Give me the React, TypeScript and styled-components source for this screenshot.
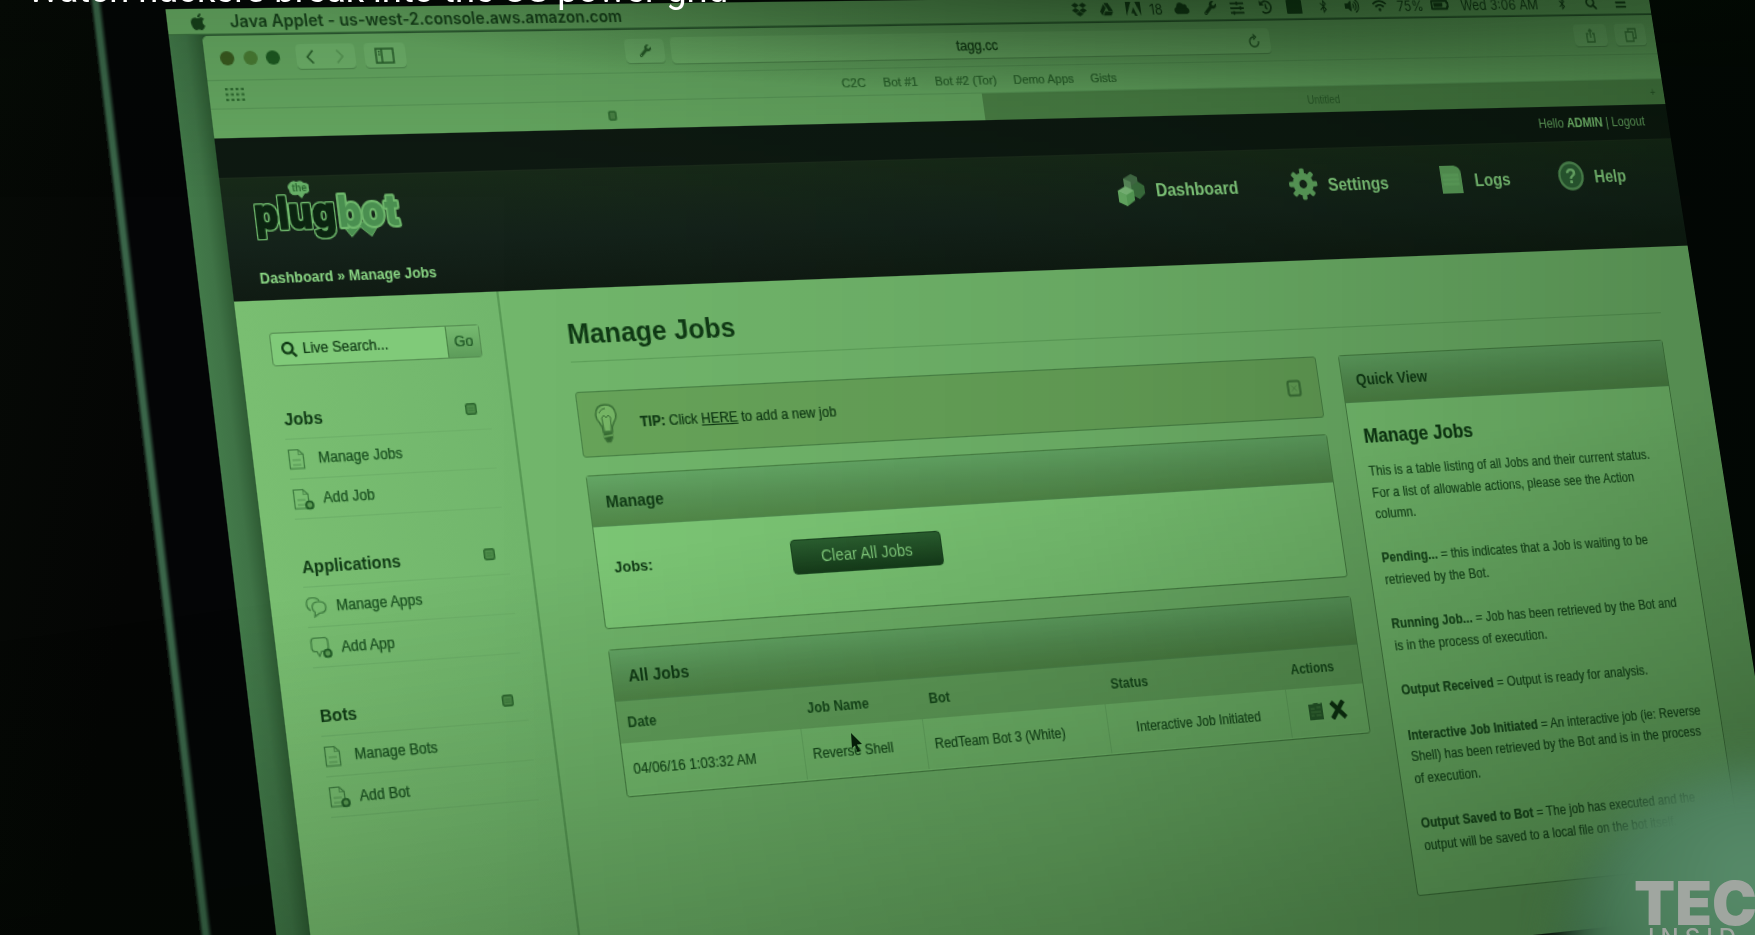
import React from "react";
import styled, { createGlobalStyle } from "styled-components";
import {
  FaApple, FaDropbox, FaGoogleDrive, FaCloud, FaWrench, FaHistory, FaBluetoothB,
  FaVolumeUp, FaWifi, FaBatteryThreeQuarters, FaSearch, FaBars, FaSlidersH,
} from "react-icons/fa";

const GlobalStyle = createGlobalStyle`
  html, body { margin: 0; background: #050606; }
  *, *::before, *::after { box-sizing: border-box; }
`;

const ink = "#103a15";
const soft = "#23602a";
const line = "#4a8446";

/* Projection of the flat display (origin: top-left of the web page) onto the camera view. */
const projection =
  "matrix3d(1.20838,-0.013395,0,0.000106818,0.13761,1.19021,0,-0.00002951,0,0,1,0,215.5,138.5,0,1)";

const Scene = styled.div`
  position: relative;
  width: 1755px;
  height: 935px;
  overflow: hidden;
  background: linear-gradient(100deg, #060a06 0%, #040504 12%, #040505 90%, #0a0e0b 100%);
  font-family: "Liberation Sans", Arial, sans-serif;
  color: ${ink};
`;

const Laptop = styled.div`
  position: absolute;
  left: 0;
  top: 0;
  transform-origin: 0 0;
  transform: ${projection} translate(-91px, -160px);
  width: 1621px;
  height: 960px;
  padding: 51px 0 0 62px;
  background: linear-gradient(90deg, #060a07 0, #3a6549 3px, #3a6549 6px, #040506 10px);
`;

const Display = styled.div`
  width: 1436px;
  height: 868px;
  overflow: hidden;
  display: flex;
  flex-direction: column;
  background: linear-gradient(90deg, #437a4a 0, #3f7346 14px, #2c5831 30px);
`;

const MenuBar = styled.div`
  flex: none;
  height: 22px;
  display: flex;
  justify-content: space-between;
  align-items: center;
  padding: 0 17px 0 18px;
  background: #64a560;
  border-bottom: 1px solid #3d7340;
  font-family: Inter, sans-serif;
  font-size: 14px;
  color: #17401b;
`;

const MenuLeft = styled.div`
  display: flex;
  align-items: center;
  gap: 19px;
  font-weight: 600;
  white-space: nowrap;
`;

const StatusItems = styled.div`
  display: flex;
  align-items: center;
  font-size: 13px;
`;

const StatusItem = styled.span<{ $w: number }>`
  width: ${(p) => p.$w}px;
  display: flex;
  justify-content: center;
  white-space: nowrap;
`;

const Window = styled.div`
  flex: 1;
  margin: 1px 0 0 28px;
  display: flex;
  flex-direction: column;
  border-radius: 5px 0 0 0;
  overflow: hidden;
  background: #72b76c;
`;

const Toolbar = styled.div`
  flex: none;
  height: 38px;
  display: grid;
  grid-template-columns: 363px 36px 584px 1fr;
  column-gap: 6px;
  align-items: center;
  background: #66a862;
  border-bottom: 1px solid #5a9958;
`;

const ToolLeft = styled.div`
  display: flex;
  align-items: center;
  padding-left: 13px;
`;

const Light = styled.i<{ $c: string }>`
  width: 12px;
  height: 12px;
  margin-right: 7.5px;
  border-radius: 50%;
  background: ${(p) => p.$c};
`;

const ToolButton = styled.div<{ $w: number; $ml?: number }>`
  width: ${(p) => p.$w}px;
  height: 21px;
  margin-left: ${(p) => p.$ml ?? 0}px;
  display: flex;
  align-items: center;
  justify-content: space-around;
  border-radius: 4px;
  background: #6fb26b;
  box-shadow: 0 1px 0 #528c50;
  color: #2a5f2c;
`;

const AddressBar = styled.div`
  height: 23px;
  display: grid;
  grid-template-columns: 1fr auto 1fr;
  align-items: center;
  padding: 0 10px 0 6px;
  border-radius: 4px;
  background: #70b46b;
  box-shadow: 0 1px 0 #528c50;
  font-size: 12.5px;
  color: #164019;
  -webkit-text-stroke: 0.3px #164019;
  svg { justify-self: end; }
`;

const ToolRight = styled.div`
  display: flex;
  justify-content: flex-end;
  padding-right: 10px;
`;

const Bookmarks = styled.div`
  flex: none;
  height: 24px;
  display: grid;
  grid-template-columns: 1fr auto 1fr;
  align-items: center;
  padding: 0 22px 0 14px;
  background: #66a862;
  border-bottom: 1px solid #5a9958;
`;

const BookmarkList = styled.div`
  display: flex;
  gap: 16.5px;
  font-size: 11.5px;
  color: #2b632d;
  -webkit-text-stroke: 0.2px #2b632d;
`;

const TabStrip = styled.div`
  flex: none;
  height: 24px;
  display: grid;
  grid-template-columns: 699px 1fr 24px;
  font-size: 10px;
  color: #2b5c2b;
`;

const Tab = styled.div<{ $active?: boolean }>`
  display: flex;
  align-items: center;
  justify-content: center;
  background: ${(p) => (p.$active ? "#67a962" : "#4d8448")};
`;

const TopBar = styled.div`
  flex: none;
  height: 34px;
  display: flex;
  align-items: center;
  justify-content: flex-end;
  padding: 0 26px 1px;
  background: #0e1912;
  border-bottom: 1px solid #1c2c1c;
  color: #72b76c;
  font-size: 12px;
  white-space: pre;
  b { color: #86d47e; }
`;

const Header = styled.div`
  flex: none;
  height: 102px;
  padding: 0 56px 0 23px;
  background: linear-gradient(180deg, #182a19 0%, #14221a 55%, #101b13 100%);
  color: #8ad684;
`;

const HeaderRow = styled.div`
  height: 62px;
  display: flex;
  justify-content: space-between;
  align-items: center;
`;

const Nav = styled.nav`
  display: flex;
  gap: 52.5px;
  padding-top: 2px;
`;

const NavItem = styled.div`
  display: flex;
  align-items: center;
  gap: 11px;
  font-size: 16px;
  font-weight: bold;
  line-height: 26px;
  span { padding-top: 4px; }
`;

const Breadcrumb = styled.div`
  margin: 12px 0 0 1px;
  line-height: 20px;
  font-size: 12px;
  font-weight: bold;
`;

const Body = styled.div`
  flex: 1;
  display: flex;
  background: #72b76c;
`;

const Sidebar = styled.aside`
  width: 228px;
  padding: 27px 19px 0 26px;
  border-right: 2px solid #589a55;
  background: linear-gradient(90deg, #79be71, #71b66c);
`;

const Search = styled.div`
  height: 28px;
  display: grid;
  grid-template-columns: 1fr 29px;
  border: 1px solid #568f52;
  border-radius: 3px;
  background: #80ca79;
  font-size: 12px;
  -webkit-text-stroke: 0.2px ${ink};
`;

const SearchField = styled.div`
  display: flex;
  align-items: center;
  gap: 5px;
  padding-left: 8px;
`;

const GoButton = styled.div`
  display: flex;
  align-items: center;
  justify-content: center;
  border-left: 1px solid ${line};
  background: linear-gradient(#76ba70, #5d9c5a);
  color: ${soft};
  font-size: 12.5px;
`;

const Section = styled.section`
  margin: 27px 0 -5px 3px;
`;

const SectionTitle = styled.div`
  height: 33.5px;
  display: flex;
  align-items: center;
  justify-content: space-between;
  padding: 1px 11px 0 1px;
  border-bottom: 1px solid #6db068;
  font-size: 14px;
  font-weight: bold;
  svg { margin-top: -1px; }
`;

const SideLink = styled.div`
  height: 33.3px;
  display: flex;
  align-items: center;
  gap: 7px;
  padding-top: 1px;
  border-bottom: 1px solid #6db068;
  font-size: 12px;
  color: #1b5121;
  -webkit-text-stroke: 0.25px #1b5121;
  svg { flex: none; }
`;

const Main = styled.main`
  flex: 1;
  padding: 25px 41px 0 56px;
`;

const PageTitle = styled.h1`
  margin: 0 0 25px;
  padding-bottom: 9px;
  border-bottom: 1px solid #5fa25b;
  font-size: 24px;
  line-height: 28px;
`;

const Columns = styled.div`
  display: grid;
  grid-template-columns: 710px 347px;
  column-gap: 23px;
  align-items: start;
`;

const Stack = styled.div`
  display: flex;
  flex-direction: column;
`;

const Tip = styled.div`
  height: 56px;
  display: grid;
  grid-template-columns: 20px 1fr 16px;
  column-gap: 20px;
  align-items: center;
  padding: 0 17px 0 14px;
  border: 1.4px solid ${line};
  border-radius: 3px;
  background: #68a55a;
  font-size: 12px;
  -webkit-text-stroke: 0.2px ${ink};
`;

const Panel = styled.section<{ $h: number; $mt?: number }>`
  height: ${(p) => p.$h}px;
  margin-top: ${(p) => p.$mt ?? 0}px;
  border: 1.3px solid ${line};
  border-radius: 3px;
  background: #7dc876;
`;

const PanelTitle = styled.div`
  height: 43px;
  display: flex;
  align-items: center;
  padding: 1px 0 0 14px;
  border-bottom: 1px solid #528c4f;
  background: linear-gradient(#65a866 0%, #5a9657 50%, #528949 100%);
  font-size: 14px;
  font-weight: bold;
`;

const ManageRow = styled.div`
  display: grid;
  grid-template-columns: 160.5px 141px;
  align-items: center;
  padding: 21px 14px;
  font-size: 13px;
  font-weight: bold;
  span { padding-bottom: 3px; }
`;

const DarkButton = styled.button`
  height: 30px;
  padding: 0;
  border: 1px solid #1a4620;
  border-radius: 4px;
  background: linear-gradient(#2c6131, #163d1b);
  color: #83cd7d;
  font: 14px "Liberation Sans", Arial, sans-serif;
`;

const TableRow = styled.div<{ $head?: boolean }>`
  height: ${(p) => (p.$head ? 35 : 43)}px;
  display: grid;
  grid-template-columns: 162.5px 113.5px 174.5px 179px 1fr;
  background: ${(p) => (p.$head ? "#65a45e" : "#77bf70")};
  font-size: 12px;
  font-weight: ${(p) => (p.$head ? "bold" : "normal")};
  color: #174a1c;
  -webkit-text-stroke: ${(p) => (p.$head ? 0 : 0.15)}px #174a1c;
`;

const Cell = styled.div<{ $center?: boolean; $rule?: boolean }>`
  display: flex;
  align-items: center;
  justify-content: ${(p) => (p.$center ? "center" : "flex-start")};
  gap: 5px;
  padding: 0 ${(p) => (p.$center ? 0 : 8)}px;
  border-right: ${(p) => (p.$rule ? "1px solid #6aaf65" : "0")};
  white-space: nowrap;
`;

const QuickBody = styled.div`
  padding: 20px 13.5px;
  font-size: 12px;
  line-height: 19.6px;
  color: #1a4d1f;
  letter-spacing: 0.07px;
  -webkit-text-stroke: 0.2px #1a4d1f;
`;

const QuickTitle = styled.h2`
  margin: 0 0 12px;
  font-size: 18px;
  line-height: 22px;
  letter-spacing: 0;
  color: ${ink};
`;

const Note = styled.p`
  margin: 0 0 20.7px;
  white-space: nowrap;
`;

const Cursor = styled.svg`
  position: absolute;
  left: 850px;
  top: 732px;
`;

const Shade = styled.div`
  position: absolute;
  inset: 0;
  background:
    radial-gradient(ellipse 900px 120px at 1150px -25px, rgba(0, 14, 0, 0.5), rgba(0, 14, 0, 0.25) 55%, transparent),
    linear-gradient(180deg, rgba(0, 14, 0, 0.14), transparent 200px),
    linear-gradient(90deg, transparent 28%, rgba(0, 14, 0, 0.09) 62%, rgba(0, 14, 0, 0.27) 100%),
    linear-gradient(172deg, transparent 54%, rgba(0, 14, 0, 0.12) 72%, rgba(0, 14, 0, 0.29) 94%);
`;

const Shoulder = styled.div`
  position: absolute;
  left: 1562px;
  top: 768px;
  width: 390px;
  height: 390px;
  border-radius: 50%;
  background: radial-gradient(circle at 48% 28%, #588c6b 0, #4a7c59 35%, #35603f 60%);
  filter: blur(20px);
`;

const Caption = styled.div`
  position: absolute;
  left: 27px;
  top: -33.5px;
  line-height: 46px;
  font-family: Roboto, sans-serif;
  font-size: 36.3px;
  color: #fff;
  white-space: nowrap;
`;

const Watermark = styled.div`
  position: absolute;
  left: 1634px;
  top: 877px;
  font-family: Inter, sans-serif;
  color: #a0a6a0;
  font-size: 60px;
  font-weight: 900;
  line-height: 52px;
  white-space: nowrap;
`;

const WatermarkSub = styled.div`
  margin-left: 14px;
  font-size: 24px;
  font-weight: 500;
  letter-spacing: 6px;
  line-height: 18px;
`;

const LogoPlug = styled.text`
  fill: #0b2410;
  stroke: #0b2410;
  stroke-width: 1.6px;
  filter: drop-shadow(1px 0 0 #6fb86c) drop-shadow(-1px 0 0 #6fb86c) drop-shadow(0 1px 0 #6fb86c)
    drop-shadow(0 -1px 0 #6fb86c);
`;

const DocIcon = ({ add }: { add?: boolean }) => (
  <svg width="19" height="19" viewBox="0 0 19 19" fill="none" stroke="#3f7c40" strokeWidth="1.1">
    <path d="M1.5 1.5h8l4 4v11.5h-12z" />
    <path d="M9.5 1.5v4h4M4 10h7M4 14h7" opacity=".6" />
    {add && <circle cx="14" cy="14.5" r="3" fill="#5c9c54" stroke="#1f5925" strokeWidth="1.7" />}
  </svg>
);

const ChatIcon = ({ add }: { add?: boolean }) => (
  <svg width="19" height="19" viewBox="0 0 19 19" fill="none" stroke="#3f7c40" strokeWidth="1.2">
    {add ? (
      <>
        <path d="M4 1.500h8q3 0 3 3v5q0 3-3 3H9l-2 4-2-4H4q-3 0-3-3v-5q0-3 3-3z" />
        <circle cx="14" cy="14.500" r="3" fill="#5c9c54" stroke="#1f5925" strokeWidth="1.7" />
      </>
    ) : (
      <>
        <path d="M4 12q-3-2-3-5.500 0-5 5-5 5 0 6 3" />
        <path d="M11 5q6 0 6 4.500 0 5-6 5l-4 2.500 .5-3.500q-2-1.500-2-4 0-4.500 5.500-4.500z" />
      </>
    )}
  </svg>
);

const ToggleIcon = () => (
  <svg width="10" height="10" viewBox="0 0 10 10">
    <rect x=".7" y=".7" width="8.600" height="8.600" rx="1.500" fill="#4f8d4b" stroke="#2c662e" strokeWidth="1.400" />
    <path d="M2.500 4h5M2.500 6.200h5" stroke="#3c7a3c" strokeWidth="1" />
  </svg>
);

const Logo = () => (
  <svg width="134" height="58" viewBox="0 0 134 58">
    <g fontFamily="Inter, sans-serif" fontWeight="800" fontSize="37" strokeLinejoin="round" paintOrder="stroke">
      <path d="M76 38l8 11 8-8 9 8 8-11z" fill="#4a8f50" stroke="#6fb86c" strokeWidth="1.300" />
      <text x="74" y="41" textLength="53" lengthAdjust="spacingAndGlyphs" fill="#4a8f50" stroke="#6fb86c" strokeWidth="4">bot</text>
      <LogoPlug x="3" y="41" textLength="69" lengthAdjust="spacingAndGlyphs">plug</LogoPlug>
    </g>
    <path d="M35 4q3-4 7-2 4-2 6 1 5 0 4 4 1 5-4 5l-3 4-3-3q-7 1-7-4-2-3 0-5z" fill="#68b168" />
    <text x="37.500" y="10" fontSize="8.500" fontWeight="bold" fill="#2e6a33" fontFamily="'Liberation Sans', sans-serif">the</text>
  </svg>
);

const CubesIcon = () => (
  <svg width="28" height="30" viewBox="0 0 28 30">
    <path d="M8 5l8-4 6 3v8l-7 4-7-3z" fill="#47714a" />
    <path d="M8 5l7 3v8l-7-3z" fill="#5f9160" />
    <path d="M15 12l7-4 6 4v7l-6 5-7-4z" fill="#3d7340" />
    <path d="M1 16l8-4 8 4v9l-8 5-8-4z" fill="#5aa35a" />
    <path d="M1 16l8-4 8 4-8 4z" fill="#7fbf7d" />
    <path d="M1 16l8 4v10l-8-4z" fill="#6ab268" />
  </svg>
);

const GearIcon = () => (
  <svg width="29" height="30" viewBox="-14.5 -15 29 30">
    <g fill="#63a962">
      {[0, 45, 90, 135, 180, 225, 270, 315].map((a) => (
        <rect key={a} x="-2.400" y="-14.500" width="4.800" height="7" rx="1.400" transform={`rotate(${a})`} />
      ))}
    </g>
    <circle r="7.200" fill="none" stroke="#63a962" strokeWidth="6.500" />
  </svg>
);

const LogsIcon = () => (
  <svg width="28" height="28" viewBox="0 0 28 28">
    <path d="M3 1h15q7 1 7 8v18H3z" fill="#62a860" />
    <path d="M5 10h17M5 14h17M5 18h17" stroke="#6ab468" strokeWidth="3" />
  </svg>
);

const HelpIcon = () => (
  <svg width="28" height="28" viewBox="0 0 28 28">
    <circle cx="14" cy="14" r="12.500" fill="#31663a" stroke="#5b9b5d" strokeWidth="2.500" />
    <text x="14" y="21" textAnchor="middle" fontSize="20" fontWeight="bold" fill="#7fc97c" fontFamily="'Liberation Sans', sans-serif">?</text>
  </svg>
);

const BulbIcon = () => (
  <svg width="20" height="34" viewBox="0 0 20 34" fill="none" stroke="#3d7339" strokeWidth="1.500">
    <path d="M6 24q0-5-2.500-8Q1 13.500 1 9.500 1.500 1 10 1t9 8.500q0 4-2.500 6.500Q14 19 14 24z" fill="#77b766" />
    <path d="M7 23l-1-11 2-2 2 2 2-2 2 2-1 11M4 8q2-4 6-4" strokeWidth="1" />
    <path d="M6.500 25h7v4l-2 3.500h-3l-2-3.500z" fill="#34682f" />
    <path d="M6 28l8-1" stroke="#6aa85c" />
  </svg>
);

const CloseBox = () => (
  <svg width="15" height="16" viewBox="0 0 15 16" fill="none" stroke="#3d7339">
    <rect x="1.500" y="1.500" width="12" height="13" rx="2" strokeWidth="2.200" />
    <path d="M5 5.500l5 5M10 5.500l-5 5" strokeWidth=".9" opacity=".6" />
  </svg>
);

const SaveIcon = () => (
  <svg width="17" height="17" viewBox="0 0 17 17">
    <path d="M1 2h4l2-1h3l2 1 3-1v15H1z" fill="#2b5f2f" />
    <path d="M3 6h4M9 5h4M3 9h10M3 12h3M8 12h5" stroke="#4a8446" strokeWidth="1.200" />
  </svg>
);

const CrossIcon = () => (
  <svg width="17" height="17" viewBox="0 0 17 17">
    <path d="M3.500 3l10.500 11M13 2.500L3.500 14.500" stroke="#0f3313" strokeWidth="4.400" strokeLinecap="square" />
  </svg>
);

const GridDots = () => (
  <svg width="17" height="13" viewBox="0 0 17 13" fill="#2f6a31">
    {[1, 5.500, 10].map((y) => [0, 4.500, 9, 13.500].map((x) => <rect key={`${x}-${y}`} x={x} y={y} width="2.400" height="2" />))}
  </svg>
);

const Stroke = ({ d, w = 13, h = 14, c = "#2a5f2c" }: { d: string; w?: number; h?: number; c?: string }) => (
  <svg width={w} height={h} viewBox={`0 0 ${w} ${h}`} fill="none" stroke={c} strokeWidth="1.500">
    <path d={d} />
  </svg>
);

const sections = [
  { title: "Jobs", Icon: DocIcon, links: ["Manage Jobs", "Add Job"] },
  { title: "Applications", Icon: ChatIcon, links: ["Manage Apps", "Add App"] },
  { title: "Bots", Icon: DocIcon, links: ["Manage Bots", "Add Bot"] },
];

const notes: { term?: string; lines: string[] }[] = [
  { lines: ["This is a table listing of all Jobs and their current status.", "For a list of allowable actions, please see the Action", "column."] },
  { term: "Pending...", lines: [" = this indicates that a Job is waiting to be", "retrieved by the Bot."] },
  { term: "Running Job...", lines: [" = Job has been retrieved by the Bot and", "is in the process of execution."] },
  { term: "Output Received", lines: [" = Output is ready for analysis."] },
  { term: "Interactive Job Initiated", lines: [" = An interactive job (ie: Reverse", "Shell) has been retrieved by the Bot and is in the process", "of execution."] },
  { term: "Output Saved to Bot", lines: [" = The job has executed and the", "output will be saved to a local file on the bot itself."] },
];

const status: [number, React.ReactNode][] = [
  [27, <FaDropbox size={15} />],
  [27, <FaGoogleDrive size={13} />],
  [26, <svg width="15" height="13" viewBox="0 0 15 13"><path d="M0 0h5.500L0 13zM9.500 0H15v13zM7.500 5l3.500 8H8.500l-1-2.600H5z" fill="currentColor" /></svg>],
  [21, "18"],
  [30, <FaCloud size={15} />],
  [28, <FaWrench size={13} />],
  [28, <FaSlidersH size={14} />],
  [30, <FaHistory size={13} />],
  [30, <svg width="16" height="13" viewBox="0 0 16 13"><rect width="16" height="13" rx="1" fill="currentColor" /></svg>],
  [30, <FaBluetoothB size={13} />],
  [30, <FaVolumeUp size={15} />],
  [28, <FaWifi size={15} />],
  [38, "75%"],
  [24, <FaBatteryThreeQuarters size={19} />],
  [106, "Wed 3:06 AM"],
  [30, <FaBluetoothB size={12} />],
  [33, <FaSearch size={12} />],
  [32, <FaBars size={13} />],
];

export default function App() {
  return (
    <Scene>
      <GlobalStyle />
      <Laptop>
        <Display>
          <MenuBar>
            <MenuLeft>
              <FaApple size={16} />
              <span>Java Applet - us-west-2.console.aws.amazon.com</span>
            </MenuLeft>
            <StatusItems>
              {status.map(([w, node], i) => (
                <StatusItem key={i} $w={w}>{node}</StatusItem>
              ))}
            </StatusItems>
          </MenuBar>
          <Window>
            <Toolbar>
              <ToolLeft>
                <Light $c="#3a5a20" />
                <Light $c="#4a7c34" />
                <Light $c="#1d5a22" />
                <ToolButton $w={51} $ml={6}>
                  <Stroke d="M8.500 1.500l-5 5.500 5 5.500" />
                  <Stroke d="M4 1.500L9 7l-5 5.500" c="#589755" />
                </ToolButton>
                <ToolButton $w={36} $ml={8}>
                  <Stroke w={17} h={14} d="M1 1h15v12H1zM6 1v12M3 3.500h1.500M3 6h1.500" />
                </ToolButton>
              </ToolLeft>
              <ToolButton $w={36}><FaWrench size={11} /></ToolButton>
              <AddressBar>
                <span />
                <span>tagg.cc</span>
                <Stroke w={12} h={14} d="M10 7a4.500 4.500 0 1 1-4-4M5 .5l2.500 2.500L5 5.500" />
              </AddressBar>
              <ToolRight>
                <ToolButton $w={36}>
                  <Stroke w={12} h={14} c="#3d7a3d" d="M4 5H2v8h8V5H8M6 9V1.500M4 3l2-2 2 2" />
                </ToolButton>
                <ToolButton $w={34} $ml={9}>
                  <Stroke w={13} h={14} c="#3d7a3d" d="M1 4h8v9H1zM4 4V1h8v9H9" />
                </ToolButton>
              </ToolRight>
            </Toolbar>
            <Bookmarks>
              <GridDots />
              <BookmarkList>
                <span>C2C</span>
                <span>Bot #1</span>
                <span>Bot #2 (Tor)</span>
                <span>Demo Apps</span>
                <span>Gists</span>
              </BookmarkList>
              <span />
            </Bookmarks>
            <TabStrip>
              <Tab $active>
                <svg width="8" height="9" viewBox="0 0 8 9"><rect x="1" y="1" width="6" height="7" rx="1" fill="#4a8446" stroke="#2f6a31" strokeWidth="1.500" /></svg>
              </Tab>
              <Tab>Untitled</Tab>
              <Tab>+</Tab>
            </TabStrip>
            <TopBar>Hello <b>ADMIN</b> | Logout</TopBar>
            <Header>
              <HeaderRow>
                <Logo />
                <Nav>
                  <NavItem><CubesIcon /><span>Dashboard</span></NavItem>
                  <NavItem><GearIcon /><span>Settings</span></NavItem>
                  <NavItem><LogsIcon /><span>Logs</span></NavItem>
                  <NavItem><HelpIcon /><span>Help</span></NavItem>
                </Nav>
              </HeaderRow>
              <Breadcrumb>Dashboard » Manage Jobs</Breadcrumb>
            </Header>
            <Body>
              <Sidebar>
                <Search>
                  <SearchField><FaSearch size={13} />Live Search...</SearchField>
                  <GoButton>Go</GoButton>
                </Search>
                {sections.map(({ title, Icon, links }) => (
                  <Section key={title}>
                    <SectionTitle>{title}<ToggleIcon /></SectionTitle>
                    {links.map((label, i) => (
                      <SideLink key={label}><Icon add={i === 1} />{label}</SideLink>
                    ))}
                  </Section>
                ))}
              </Sidebar>
              <Main>
                <PageTitle>Manage Jobs</PageTitle>
                <Columns>
                  <Stack>
                    <Tip>
                      <BulbIcon />
                      <span><b>TIP:</b> Click <u>HERE</u> to add a new job</span>
                      <CloseBox />
                    </Tip>
                    <Panel $h={130} $mt={15}>
                      <PanelTitle>Manage</PanelTitle>
                      <ManageRow>
                        <span>Jobs:</span>
                        <DarkButton>Clear All Jobs</DarkButton>
                      </ManageRow>
                    </Panel>
                    <Panel $h={123.500} $mt={17}>
                      <PanelTitle>All Jobs</PanelTitle>
                      <TableRow $head>
                        <Cell>Date</Cell>
                        <Cell>Job Name</Cell>
                        <Cell>Bot</Cell>
                        <Cell>Status</Cell>
                        <Cell>Actions</Cell>
                      </TableRow>
                      <TableRow>
                        <Cell $rule>04/06/16 1:03:32 AM</Cell>
                        <Cell $rule>Reverse Shell</Cell>
                        <Cell $rule>RedTeam Bot 3 (White)</Cell>
                        <Cell $rule $center>Interactive Job Initiated</Cell>
                        <Cell $center><SaveIcon /><CrossIcon /></Cell>
                      </TableRow>
                    </Panel>
                  </Stack>
                  <Panel $h={490}>
                    <PanelTitle>Quick View</PanelTitle>
                    <QuickBody>
                      <QuickTitle>Manage Jobs</QuickTitle>
                      {notes.map((n) => (
                        <Note key={n.lines[0]}>
                          {n.term && <b>{n.term}</b>}
                          {n.lines.map((l, i) => (
                            <React.Fragment key={l}>{i > 0 && <br />}{l}</React.Fragment>
                          ))}
                        </Note>
                      ))}
                    </QuickBody>
                  </Panel>
                </Columns>
              </Main>
            </Body>
          </Window>
        </Display>
      </Laptop>
      <Cursor width="13" height="21" viewBox="0 0 13 21">
        <path d="M1 1l11 11-5 .5 3 6.500-2.500 1-2.500-6.500L2 16z" fill="#06200a" />
      </Cursor>
      <Shade />
      <Shoulder />
      <Caption>Watch hackers break into the US power grid</Caption>
      <Watermark>
        TEC
        <WatermarkSub>INSID</WatermarkSub>
      </Watermark>
    </Scene>
  );
}
